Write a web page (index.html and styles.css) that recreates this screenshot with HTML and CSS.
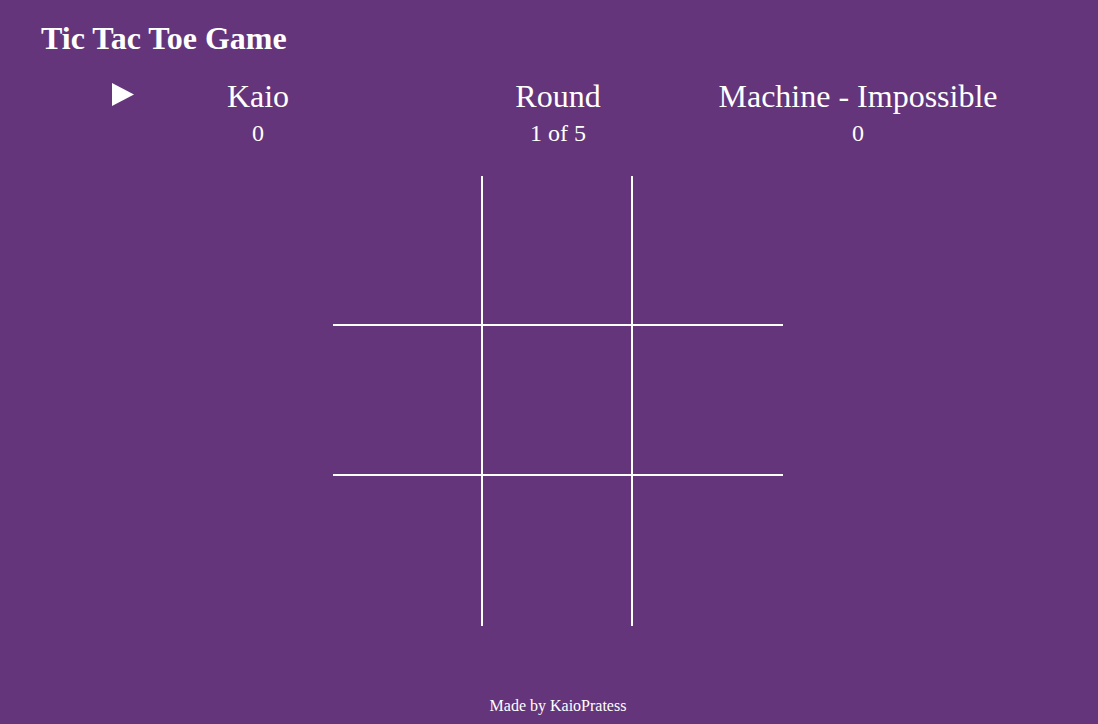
FILE: index.html
```html
<!DOCTYPE html>
<html lang="en">
<head>
<meta charset="utf-8">
<title>Tic Tac Toe Game</title>
<link rel="stylesheet" href="styles.css">
</head>
<body>
<div class="page">
  <h1 class="title">Tic Tac Toe Game</h1>
  <div class="scoreboard">
    <div class="column player">
      <svg class="turn" width="22" height="23" viewBox="0 0 22 23"><polygon points="0,0 22,11.5 0,23" fill="#fff"/></svg>
      <div class="name">Kaio</div>
      <div class="value">0</div>
    </div>
    <div class="column">
      <div class="name">Round</div>
      <div class="value">1 of 5</div>
    </div>
    <div class="column">
      <div class="name">Machine - Impossible</div>
      <div class="value">0</div>
    </div>
  </div>
  <div class="board">
    <div class="cell"></div><div class="cell"></div><div class="cell"></div>
    <div class="cell"></div><div class="cell"></div><div class="cell"></div>
    <div class="cell"></div><div class="cell"></div><div class="cell"></div>
  </div>
  <footer class="footer">Made by KaioPratess</footer>
</div>
</body>
</html>
```
FILE: styles.css
```css
html, body {
  margin: 0;
  padding: 0;
  background: #64357a;
  color: #fff;
  font-family: "Liberation Serif", "Times New Roman", serif;
}
.page {
  padding-left: 18px;
  height: 724px;
  box-sizing: border-box;
  padding-top: 20px;
}
.title {
  margin: 0 0 0 23px;
  font-size: 32px;
  line-height: 36px;
  font-weight: bold;
}
.scoreboard {
  display: grid;
  grid-template-columns: 300px 300px 300px;
  justify-content: center;
  margin-top: 22px;
}
.column {
  position: relative;
  display: flex;
  flex-direction: column;
  align-items: center;
  text-align: center;
}
.turn {
  position: absolute;
  left: 4px;
  top: 5px;
}
.name {
  font-size: 32px;
  line-height: 36px;
}
.value {
  font-size: 24px;
  line-height: 28px;
  margin-top: 5px;
}
.board {
  display: grid;
  grid-template-columns: repeat(3, 150px);
  grid-template-rows: repeat(3, 150px);
  width: 450px;
  margin: 29px auto 0;
}
.cell {
  box-sizing: border-box;
  border-right: 2px solid #fff;
  border-bottom: 2px solid #fff;
}
.cell:nth-child(3n) {
  border-right: none;
}
.cell:nth-child(n+7) {
  border-bottom: none;
}
.footer {
  margin-top: 71px;
  text-align: center;
  font-size: 16px;
  line-height: 18px;
}
```
